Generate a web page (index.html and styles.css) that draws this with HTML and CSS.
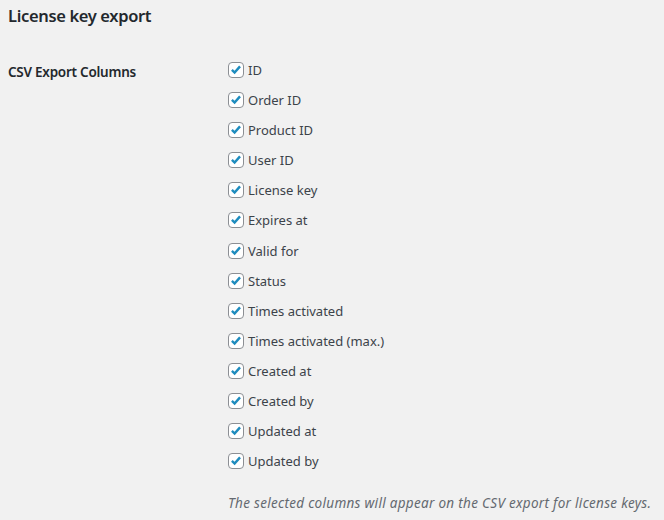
FILE: index.html
```html
<!DOCTYPE html>
<html>
<head>
<meta charset="utf-8">
<link rel="stylesheet" href="styles.css">
</head>
<body>
<div class="wrap">
  <h2 class="title">License key export</h2>
  <div class="form-row">
    <div class="th">CSV Export Columns</div>
    <div class="td">
      <ul class="options">
        <li><span class="cb"><svg viewBox="0 0 16 16"><path d="M3.3 7.9 L6.4 10.9 L12.6 3.9"/></svg></span>ID</li>
        <li><span class="cb"><svg viewBox="0 0 16 16"><path d="M3.3 7.9 L6.4 10.9 L12.6 3.9"/></svg></span>Order ID</li>
        <li><span class="cb"><svg viewBox="0 0 16 16"><path d="M3.3 7.9 L6.4 10.9 L12.6 3.9"/></svg></span>Product ID</li>
        <li><span class="cb"><svg viewBox="0 0 16 16"><path d="M3.3 7.9 L6.4 10.9 L12.6 3.9"/></svg></span>User ID</li>
        <li><span class="cb"><svg viewBox="0 0 16 16"><path d="M3.3 7.9 L6.4 10.9 L12.6 3.9"/></svg></span>License key</li>
        <li><span class="cb"><svg viewBox="0 0 16 16"><path d="M3.3 7.9 L6.4 10.9 L12.6 3.9"/></svg></span>Expires at</li>
        <li><span class="cb"><svg viewBox="0 0 16 16"><path d="M3.3 7.9 L6.4 10.9 L12.6 3.9"/></svg></span>Valid for</li>
        <li><span class="cb"><svg viewBox="0 0 16 16"><path d="M3.3 7.9 L6.4 10.9 L12.6 3.9"/></svg></span>Status</li>
        <li><span class="cb"><svg viewBox="0 0 16 16"><path d="M3.3 7.9 L6.4 10.9 L12.6 3.9"/></svg></span>Times activated</li>
        <li><span class="cb"><svg viewBox="0 0 16 16"><path d="M3.3 7.9 L6.4 10.9 L12.6 3.9"/></svg></span>Times activated (max.)</li>
        <li><span class="cb"><svg viewBox="0 0 16 16"><path d="M3.3 7.9 L6.4 10.9 L12.6 3.9"/></svg></span>Created at</li>
        <li><span class="cb"><svg viewBox="0 0 16 16"><path d="M3.3 7.9 L6.4 10.9 L12.6 3.9"/></svg></span>Created by</li>
        <li><span class="cb"><svg viewBox="0 0 16 16"><path d="M3.3 7.9 L6.4 10.9 L12.6 3.9"/></svg></span>Updated at</li>
        <li><span class="cb"><svg viewBox="0 0 16 16"><path d="M3.3 7.9 L6.4 10.9 L12.6 3.9"/></svg></span>Updated by</li>
      </ul>
      <p class="description">The selected columns will appear on the CSV export for license keys.</p>
    </div>
  </div>
</div>
</body>
</html>
```
FILE: styles.css
```css
html, body {
  margin: 0;
  background: #f1f1f1;
}
body {
  font-family: "Noto Sans", "Open Sans", sans-serif;
  font-size: 13px;
  color: #23282d;
}
.wrap {
  padding: 4px 8px 0 8px;
}
.title {
  margin: 0;
  font-size: 16.5px;
  letter-spacing: -0.35px;
  line-height: 24px;
  font-weight: 600;
}
.form-row {
  display: grid;
  grid-template-columns: 220px 1fr;
  margin-top: 27px;
}
.th {
  font-size: 13.5px;
  letter-spacing: -0.25px;
  font-weight: 600;
  line-height: 20px;
  padding-top: 7px;
}
.options {
  list-style: none;
  margin: 0;
  padding: 0;
  color: #3c434a;
}
.options li {
  display: flex;
  align-items: center;
  gap: 4px;
  height: 30.08px;
}
.cb {
  width: 14px;
  height: 14px;
  border: 1px solid #8c8f94;
  border-radius: 4px;
  background: #fff;
  display: inline-flex;
  flex: none;
}
.cb svg {
  width: 14px;
  height: 14px;
}
.cb path {
  fill: none;
  stroke: #1e8cbe;
  stroke-width: 2.8;
}
.description {
  margin: 17px 0 0 0;
  font-style: italic;
  font-size: 13.5px;
  letter-spacing: 0.3px;
  color: #646970;
  line-height: 20px;
}
```
